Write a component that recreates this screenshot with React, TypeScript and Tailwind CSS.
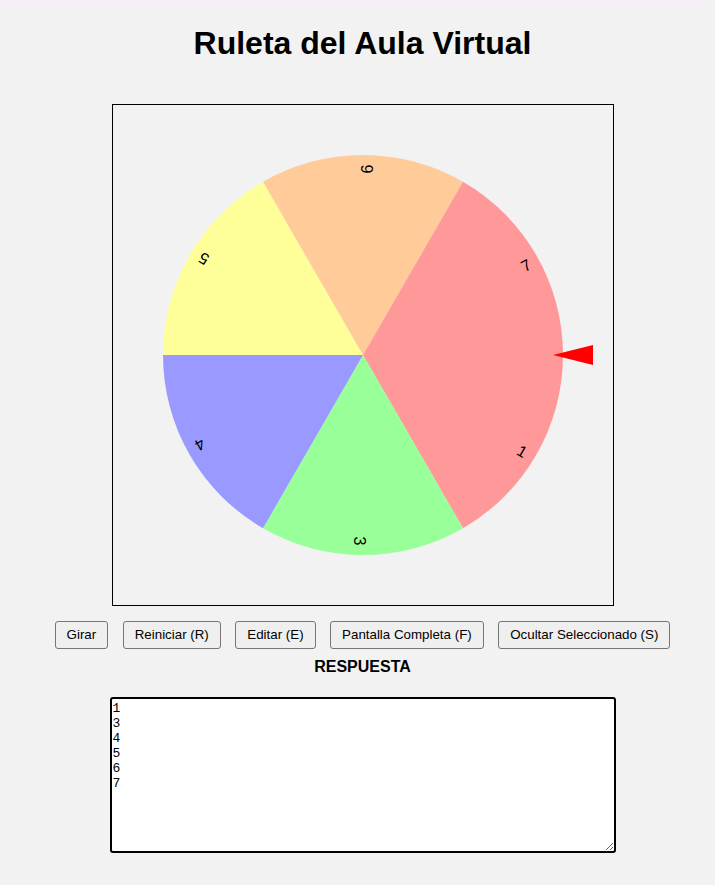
import React from "react";

const CX = 250;
const CY = 250;
const R = 200;

const slices = [
  { label: "1", color: "#ff9999" },
  { label: "3", color: "#99ff99" },
  { label: "4", color: "#9999ff" },
  { label: "5", color: "#ffff99" },
  { label: "6", color: "#ffcc99" },
  { label: "7", color: "#ff9999" },
];

function slicePath(i: number, n: number) {
  const a0 = (i * 2 * Math.PI) / n;
  const a1 = ((i + 1) * 2 * Math.PI) / n;
  const x0 = CX + R * Math.cos(a0);
  const y0 = CY + R * Math.sin(a0);
  const x1 = CX + R * Math.cos(a1);
  const y1 = CY + R * Math.sin(a1);
  return `M ${CX} ${CY} L ${x0} ${y0} A ${R} ${R} 0 0 1 ${x1} ${y1} Z`;
}

function Wheel() {
  const n = slices.length;
  return (
    <svg width="500" height="500" viewBox="0 0 500 500" className="block">
      {slices.map((s, i) => (
        <path key={"p" + i} d={slicePath(i, n)} fill={s.color} />
      ))}
      {slices.map((s, i) => {
        const mid = ((i + 0.5) * 360) / n;
        return (
          <g key={"t" + i} transform={`translate(${CX} ${CY}) rotate(${mid})`}>
            <text
              x={186}
              y={4}
              textAnchor="middle"
              dominantBaseline="central"
              fontSize="16"
              fontFamily="'Liberation Sans', Arial, sans-serif"
              fill="#000"
            >
              {s.label}
            </text>
          </g>
        );
      })}
      <polygon points="440,250 480,240 480,260" fill="#ff0000" />
    </svg>
  );
}

const btn =
  "h-[28px] px-[11px] border border-[#767676] rounded-[3px] bg-[#efefef] text-[13.333px] leading-[16px] text-black";

export default function App() {
  return (
    <div
      className="min-h-[885px] w-full bg-[#f2f2f2] text-black"
      style={{ fontFamily: "'Liberation Sans', Arial, sans-serif" }}
    >
      <div className="h-[3px] bg-[#f6eef6]" />
      <div className="pl-[10px] flex flex-col items-center">
        <h1 className="mt-[22px] text-[32px] leading-[37px] font-bold">Ruleta del Aula Virtual</h1>
        <div className="mt-[42px] border border-black">
          <Wheel />
        </div>
        <div className="mt-[15px] flex gap-[14.5px]">
          <button className={btn}>Girar</button>
          <button className={btn}>Reiniciar (R)</button>
          <button className={btn}>Editar (E)</button>
          <button className={btn}>Pantalla Completa (F)</button>
          <button className={btn}>Ocultar Seleccionado (S)</button>
        </div>
        <div className="mt-[9px] text-[16px] leading-[18px] font-bold">RESPUESTA</div>
        <textarea
          className="mt-[21px] w-[506px] h-[156px] border-2 border-black rounded-[3px] bg-white pl-[1px] pt-[2px] text-[13px] leading-[15px] text-black outline-none"
          style={{ fontFamily: "'Liberation Mono', 'DejaVu Sans Mono', monospace" }}
          defaultValue={"1\n3\n4\n5\n6\n7"}
        />
      </div>
    </div>
  );
}
